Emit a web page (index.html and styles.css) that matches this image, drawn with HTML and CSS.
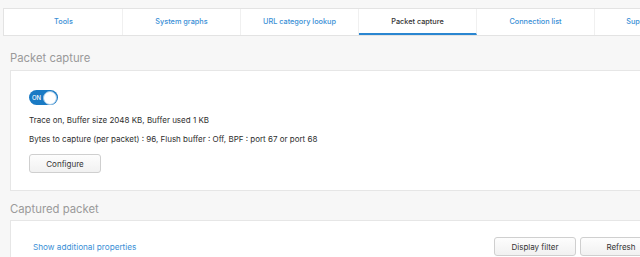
FILE: index.html
```html
<!DOCTYPE html>
<html lang="en">
<head>
    <meta charset="UTF-8">
    <title>Packet capture</title>
    <link rel="stylesheet" href="styles.css">
</head>
<body>
    <div class="tabs">
        <a class="tab">Tools</a>
        <a class="tab">System graphs</a>
        <a class="tab">URL category lookup</a>
        <a class="tab active">Packet capture</a>
        <a class="tab">Connection list</a>
        <a class="tab">Support access</a>
    </div>

    <div class="page">
        <h2 class="section-title">Packet capture</h2>
        <div class="card">
            <label class="toggle">
                <input type="checkbox" checked>
                <span class="slider"><span class="on-text">ON</span></span>
            </label>
            <p class="info">Trace on, Buffer size 2048 KB, Buffer used 1 KB</p>
            <p class="info">Bytes to capture (per packet) : 96, Flush buffer : Off, BPF : port 67 or port 68</p>
            <button class="btn configure">Configure</button>
        </div>

        <h2 class="section-title second">Captured packet</h2>
        <div class="card card-bottom">
            <div class="toolbar">
                <a class="link">Show additional properties</a>
                <div class="actions">
                    <button class="btn">Display filter</button>
                    <button class="btn">Refresh</button>
                </div>
            </div>
        </div>
    </div>
</body>
</html>
```

FILE: styles.css
```css
body {
    font-family: Inter, "Noto Sans", sans-serif;
    background-color: #f7f7f7;
    margin: 0;
    padding: 8px 0 0 3px;
    overflow: hidden;
    height: 257px;
    box-sizing: border-box;
    color: #2e2e2e;
}

.tabs {
    display: flex;
    width: 720px;
    height: 26px;
    background-color: white;
    border: 1px solid #e3e3e3;
    padding-left: 1px;
}
.tab {
    width: 118px;
    flex: none;
    box-sizing: border-box;
    border-right: 1px solid #f0f0f0;
    font-size: 7.3px;
    font-weight: 500;
    color: #3a8fd6;
    text-align: center;
    line-height: 25px;
    white-space: nowrap;
}
.tab.active {
    color: #333;
    border-bottom: 2px solid #2a86d1;
}

.page {
    padding-left: 7px;
}
.section-title {
    font-size: 11.3px;
    font-weight: 400;
    color: #9a9a9a;
    margin: 0;
    line-height: 16px;
    padding: 14px 0 4px;
}
.section-title.second {
    padding: 10px 0 3px;
}

.card {
    width: 700px;
    background-color: white;
    border: 1px solid #e6e6e6;
    box-sizing: border-box;
    padding: 19px 18px 17px;
}
.card-bottom {
    padding: 16px 22px 20px;
}

.toggle {
    position: relative;
    display: block;
    width: 29px;
    height: 15px;
}
.toggle input {
    opacity: 0;
    width: 0;
    height: 0;
}
.slider {
    position: absolute;
    top: 0;
    left: 0;
    right: 0;
    bottom: 0;
    background-color: #1a7ac4;
    border-radius: 15px;
}
.slider:before {
    position: absolute;
    content: "";
    width: 12px;
    height: 12px;
    right: 1px;
    top: 1px;
    background-color: white;
    border: 0.5px solid #9cc6e8;
    border-radius: 50%;
}
.on-text {
    position: absolute;
    left: 3px;
    top: 0;
    font-size: 6px;
    font-weight: 500;
    line-height: 15px;
    color: white;
}

.info {
    font-size: 8px;
    margin: 0;
    line-height: 19px;
}
.toggle + .info {
    margin-top: 6px;
}

.btn {
    font-family: inherit;
    font-size: 8px;
    color: #333;
    background: linear-gradient(#fdfdfd, #f1f1f1);
    border: 1px solid #cfcfcf;
    border-radius: 3px;
    height: 19px;
    padding: 0 8px;
    cursor: pointer;
}
.configure {
    width: 72px;
    margin-top: 5px;
}

.toolbar {
    display: flex;
    align-items: center;
    justify-content: space-between;
    width: 629px;
}
.link {
    font-size: 8.2px;
    color: #3a8fd6;
}
.actions {
    display: flex;
    gap: 4px;
}
.actions .btn {
    width: 82px;
}
```
